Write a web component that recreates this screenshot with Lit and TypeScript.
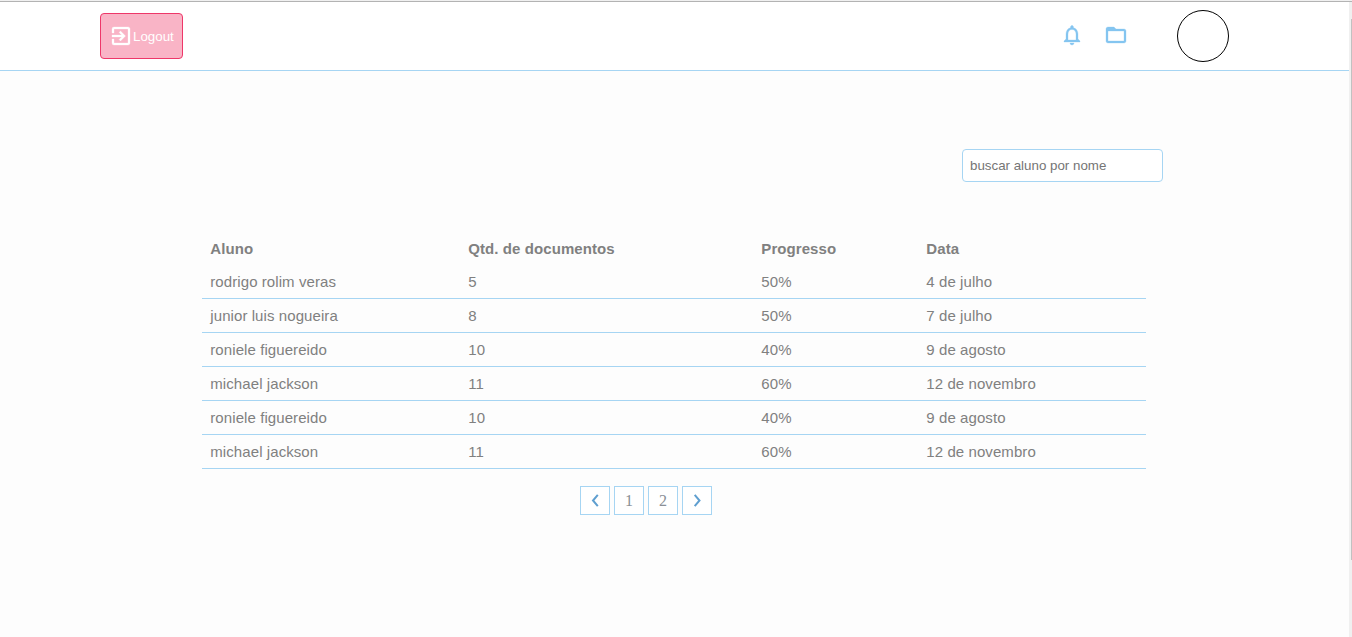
import { LitElement, html, css, svg } from "lit";
import { customElement, property, state } from "lit/decorators.js";

interface Student {
  name: string;
  docs: number;
  progress: string;
  date: string;
}

const icons: Record<string, unknown> = {
  exit: svg`<path d="M10.09 15.59L11.5 17l5-5-5-5-1.41 1.41L12.67 11H3v2h9.67l-2.58 2.59zM19 3H5a2 2 0 0 0-2 2v4h2V5h14v14H5v-4H3v4a2 2 0 0 0 2 2h14c1.1 0 2-.9 2-2V5c0-1.1-.9-2-2-2z"/>`,
  bell: svg`<path d="M12 22c1.1 0 2-.9 2-2h-4c0 1.1.89 2 2 2zm6-6v-5c0-3.07-1.64-5.64-4.5-6.32V4c0-.83-.67-1.5-1.5-1.5s-1.5.67-1.5 1.5v.68C7.63 5.36 6 7.92 6 11v5l-2 2v1h16v-1l-2-2zm-2 1H8v-6c0-2.48 1.51-4.5 4-4.5s4 2.02 4 4.5v6z"/>`,
  folder: svg`<path d="M20 6h-8l-2-2H4c-1.1 0-1.99.9-1.99 2L2 18c0 1.1.9 2 2 2h16c1.1 0 2-.9 2-2V8c0-1.1-.9-2-2-2zm0 12H4V8h16v10z"/>`,
};

@customElement("app-icon")
class AppIcon extends LitElement {
  @property() name = "";
  static styles = css`
    :host { display: block; width: 24px; height: 24px; }
    svg { display: block; width: 100%; height: 100%; fill: currentColor; stroke: currentColor; stroke-width: 0.3; }
  `;
  render() {
    return html`<svg viewBox="0 0 24 24">${icons[this.name]}</svg>`;
  }
}

@customElement("app-root")
class AppRoot extends LitElement {
  @state() students: Student[] = [
    { name: "rodrigo rolim veras", docs: 5, progress: "50%", date: "4 de julho" },
    { name: "junior luis nogueira", docs: 8, progress: "50%", date: "7 de julho" },
    { name: "roniele figuereido", docs: 10, progress: "40%", date: "9 de agosto" },
    { name: "michael jackson", docs: 11, progress: "60%", date: "12 de novembro" },
    { name: "roniele figuereido", docs: 10, progress: "40%", date: "9 de agosto" },
    { name: "michael jackson", docs: 11, progress: "60%", date: "12 de novembro" },
  ];

  static styles = css`
    :host {
      display: flex;
      flex-direction: column;
      height: 637px;
      overflow: hidden;
      box-sizing: border-box;
      font-family: "Liberation Sans", Arial, sans-serif;
      color: #808080;
      background: #fdfdfd;
    }
    * { box-sizing: border-box; }
    .edge { flex: none; height: 2px; background: #b3b3b3; border-top: 1px solid #f0f0f0; }
    .frame { flex: 1; display: flex; min-height: 0; }
    .page { flex: 1; }
    .track { width: 3px; background: #f0f0f0; padding: 17px 0 0 2px; }
    .thumb { height: 541px; background: #c1c1c1; }
    .bar {
      height: 69px;
      display: flex;
      align-items: center;
      padding: 0 120px 0 100px;
      background: #fff;
      border-bottom: 1px solid #a6d5f3;
    }
    .logout {
      width: 83px;
      height: 46px;
      display: flex;
      align-items: center;
      padding: 0 0 0 8px;
      margin: 0 auto 0 0;
      border: 1px solid #ee3769;
      border-radius: 4px;
      background: #f9b4c6;
      color: #fff;
      font: 13.333px "Liberation Sans", Arial, sans-serif;
    }
    .tools { display: flex; gap: 20px; color: #85c5f0; margin: 0 49.5px 1.5px 0; }
    .avatar { width: 52px; height: 52px; border: 1px solid #000; border-radius: 50%; background: #fff; }
    .search {
      display: block;
      width: 201px;
      height: 33px;
      margin: 78px 0 0 962px;
      padding: 0 7px;
      border: 1px solid #a6d5f3;
      border-radius: 4px;
      background: #fff;
      font: 13.333px "Liberation Sans", Arial, sans-serif;
      outline: none;
    }
    .search::placeholder { color: #757575; opacity: 1; }
    .table { width: 944px; margin: 50px 0 0 202px; font-size: 15px; letter-spacing: 0.08px; }
    .row {
      display: grid;
      grid-template-columns: 258px 293px 165px 1fr;
      height: 34px;
      align-items: center;
      padding-left: 8.3px;
      border-bottom: 1px solid #a6d5f3;
    }
    .head { height: 33px; border: 0; font-weight: bold; }
    .pager { display: flex; gap: 4px; margin: 17px 0 0 580px; }
    .pg {
      width: 30px;
      height: 29px;
      padding: 0;
      display: flex;
      align-items: center;
      justify-content: center;
      border: 1px solid #a6d5f3;
      background: #fff;
      color: #8a8f96;
      font: 16px "Liberation Serif", "Times New Roman", serif;
    }
    .chev { width: 8px; height: 13px; margin-bottom: 1px; fill: none; stroke: #5f9fd0; stroke-width: 2; }
  `;

  render() {
    return html`
      <div class="edge"></div>
      <div class="frame">
        <main class="page">
          <header class="bar">
            <button class="logout"><app-icon name="exit"></app-icon>Logout</button>
            <nav class="tools">
              <app-icon name="bell"></app-icon>
              <app-icon name="folder"></app-icon>
            </nav>
            <div class="avatar"></div>
          </header>
          <input class="search" placeholder="buscar aluno por nome" />
          <section class="table">
            <div class="row head">
              <span>Aluno</span><span>Qtd. de documentos</span><span>Progresso</span><span>Data</span>
            </div>
            ${this.students.map(
              (s) => html`<div class="row">
                <span>${s.name}</span><span>${s.docs}</span><span>${s.progress}</span><span>${s.date}</span>
              </div>`
            )}
          </section>
          <nav class="pager">
            <button class="pg"><svg class="chev" viewBox="0 0 8 13"><path d="M6.8 0.8L2 6.5L6.8 12.2"/></svg></button>
            <button class="pg">1</button>
            <button class="pg">2</button>
            <button class="pg"><svg class="chev" viewBox="0 0 8 13"><path d="M1.7 0.8L6.5 6.5L1.7 12.2"/></svg></button>
          </nav>
        </main>
        <div class="track"><div class="thumb"></div></div>
      </div>
    `;
  }
}
